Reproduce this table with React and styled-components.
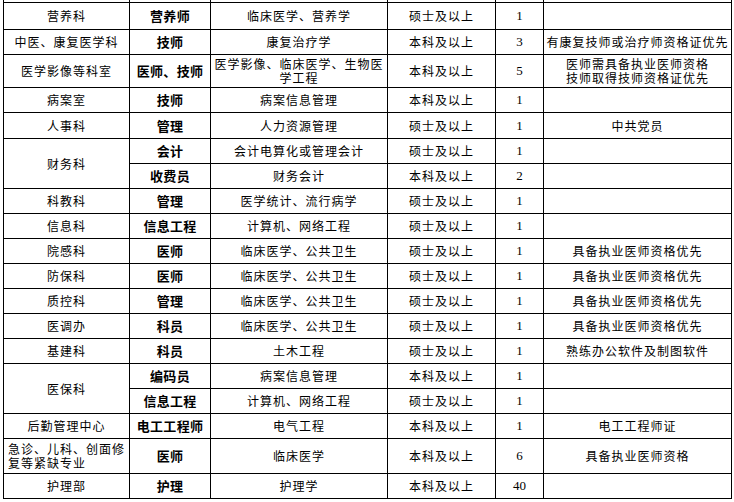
import React from 'react';
import styled, { createGlobalStyle } from 'styled-components';

const GlobalStyle = createGlobalStyle`
  html, body {
    margin: 0;
    padding: 0;
    background: #ffffff;
  }
  body {
    font-family: "Noto Sans CJK SC", "Noto Sans", sans-serif;
    color: #000000;
  }
`;

// column widths = distance between grid lines minus the 1px line
const COLS = [125, 80, 176, 107, 47, 187];

const Sheet = styled.div`
  display: grid;
  width: max-content;
  margin-left: 3px;
  grid-template-columns: ${COLS.map((w) => `${w}px`).join(' ')};
  grid-template-rows: ${(props) => props.rows.map((h) => `${h}px`).join(' ')};
  gap: 1px;
  padding: 0 1px 1px 1px;
  background: #000000;
`;

const Cell = styled.div`
  background: #ffffff;
  display: flex;
  align-items: center;
  justify-content: ${(props) => (props.left ? 'flex-start' : 'center')};
  text-align: ${(props) => (props.left ? 'left' : 'center')};
  padding: ${(props) => (props.left ? '0 1px 0 4px' : '0 1px')};
  font-size: ${(props) => (props.bold ? '13px' : '12px')};
  letter-spacing: ${(props) => (props.bold ? '0.3px' : props.num ? '0' : '1px')};
  line-height: 14px;
  font-weight: ${(props) => (props.bold ? 700 : 400)};
  font-family: ${(props) =>
    props.num
      ? '"Liberation Serif", "Noto Sans CJK SC", serif'
      : '"Noto Sans CJK SC", "Noto Sans", sans-serif'};
  grid-row: ${(props) => (props.span ? `span ${props.span}` : 'auto')};
  white-space: normal;
  word-break: break-all;
  overflow: hidden;
`;

const NumText = styled.span`
  font-size: 13px;
`;

const StubCell = styled.div`
  background: #ffffff;
`;

const rows = [
  { h: 26, dept: '营养科', role: '营养师', major: '临床医学、营养学', edu: '硕士及以上', num: '1', note: '' },
  { h: 24, dept: '中医、康复医学科', role: '技师', major: '康复治疗学', edu: '本科及以上', num: '3', note: '有康复技师或治疗师资格证优先' },
  { h: 32, dept: '医学影像等科室', role: '医师、技师', major: '医学影像、临床医学、生物医学工程', edu: '本科及以上', num: '5', note: ['医师需具备执业医师资格', '技师取得技师资格证优先'] },
  { h: 24, dept: '病案室', role: '技师', major: '病案信息管理', edu: '本科及以上', num: '1', note: '' },
  { h: 25, dept: '人事科', role: '管理', major: '人力资源管理', edu: '硕士及以上', num: '1', note: '中共党员' },
  { h: 24, dept: '财务科', span: 2, role: '会计', major: '会计电算化或管理会计', edu: '硕士及以上', num: '1', note: '' },
  { h: 24, role: '收费员', major: '财务会计', edu: '本科及以上', num: '2', note: '' },
  { h: 24, dept: '科教科', role: '管理', major: '医学统计、流行病学', edu: '硕士及以上', num: '1', note: '' },
  { h: 24, dept: '信息科', role: '信息工程', major: '计算机、网络工程', edu: '硕士及以上', num: '1', note: '' },
  { h: 24, dept: '院感科', role: '医师', major: '临床医学、公共卫生', edu: '硕士及以上', num: '1', note: '具备执业医师资格优先' },
  { h: 24, dept: '防保科', role: '医师', major: '临床医学、公共卫生', edu: '硕士及以上', num: '1', note: '具备执业医师资格优先' },
  { h: 24, dept: '质控科', role: '管理', major: '临床医学、公共卫生', edu: '硕士及以上', num: '1', note: '具备执业医师资格优先' },
  { h: 24, dept: '医调办', role: '科员', major: '临床医学、公共卫生', edu: '硕士及以上', num: '1', note: '具备执业医师资格优先' },
  { h: 24, dept: '基建科', role: '科员', major: '土木工程', edu: '硕士及以上', num: '1', note: '熟练办公软件及制图软件' },
  { h: 24, dept: '医保科', span: 2, role: '编码员', major: '病案信息管理', edu: '本科及以上', num: '1', note: '' },
  { h: 24, role: '信息工程', major: '计算机、网络工程', edu: '硕士及以上', num: '1', note: '' },
  { h: 24, dept: '后勤管理中心', role: '电工工程师', major: '电气工程', edu: '本科及以上', num: '1', note: '电工工程师证' },
  { h: 34, dept: '急诊、儿科、创面修复等紧缺专业', left: true, role: '医师', major: '临床医学', edu: '本科及以上', num: '6', note: '具备执业医师资格' },
  { h: 24, dept: '护理部', role: '护理', major: '护理学', edu: '本科及以上', num: '40', note: '' },
];

const renderLines = (value) =>
  Array.isArray(value)
    ? value.map((line, i) => (
        <React.Fragment key={i}>
          {i > 0 && <br />}
          {line}
        </React.Fragment>
      ))
    : value;

export default function App() {
  const heights = [2, ...rows.map((r) => r.h)];

  return (
    <>
      <GlobalStyle />
      <Sheet rows={heights}>
        {COLS.map((_, i) => (
          <StubCell key={`stub-${i}`} />
        ))}
        {rows.map((r, i) => (
          <React.Fragment key={i}>
            {r.dept !== undefined && (
              <Cell span={r.span} left={r.left}>
                {r.dept}
              </Cell>
            )}
            <Cell bold>{r.role}</Cell>
            <Cell>{r.major}</Cell>
            <Cell>{r.edu}</Cell>
            <Cell num>
              <NumText>{r.num}</NumText>
            </Cell>
            <Cell>
              <span>{renderLines(r.note)}</span>
            </Cell>
          </React.Fragment>
        ))}
      </Sheet>
    </>
  );
}
